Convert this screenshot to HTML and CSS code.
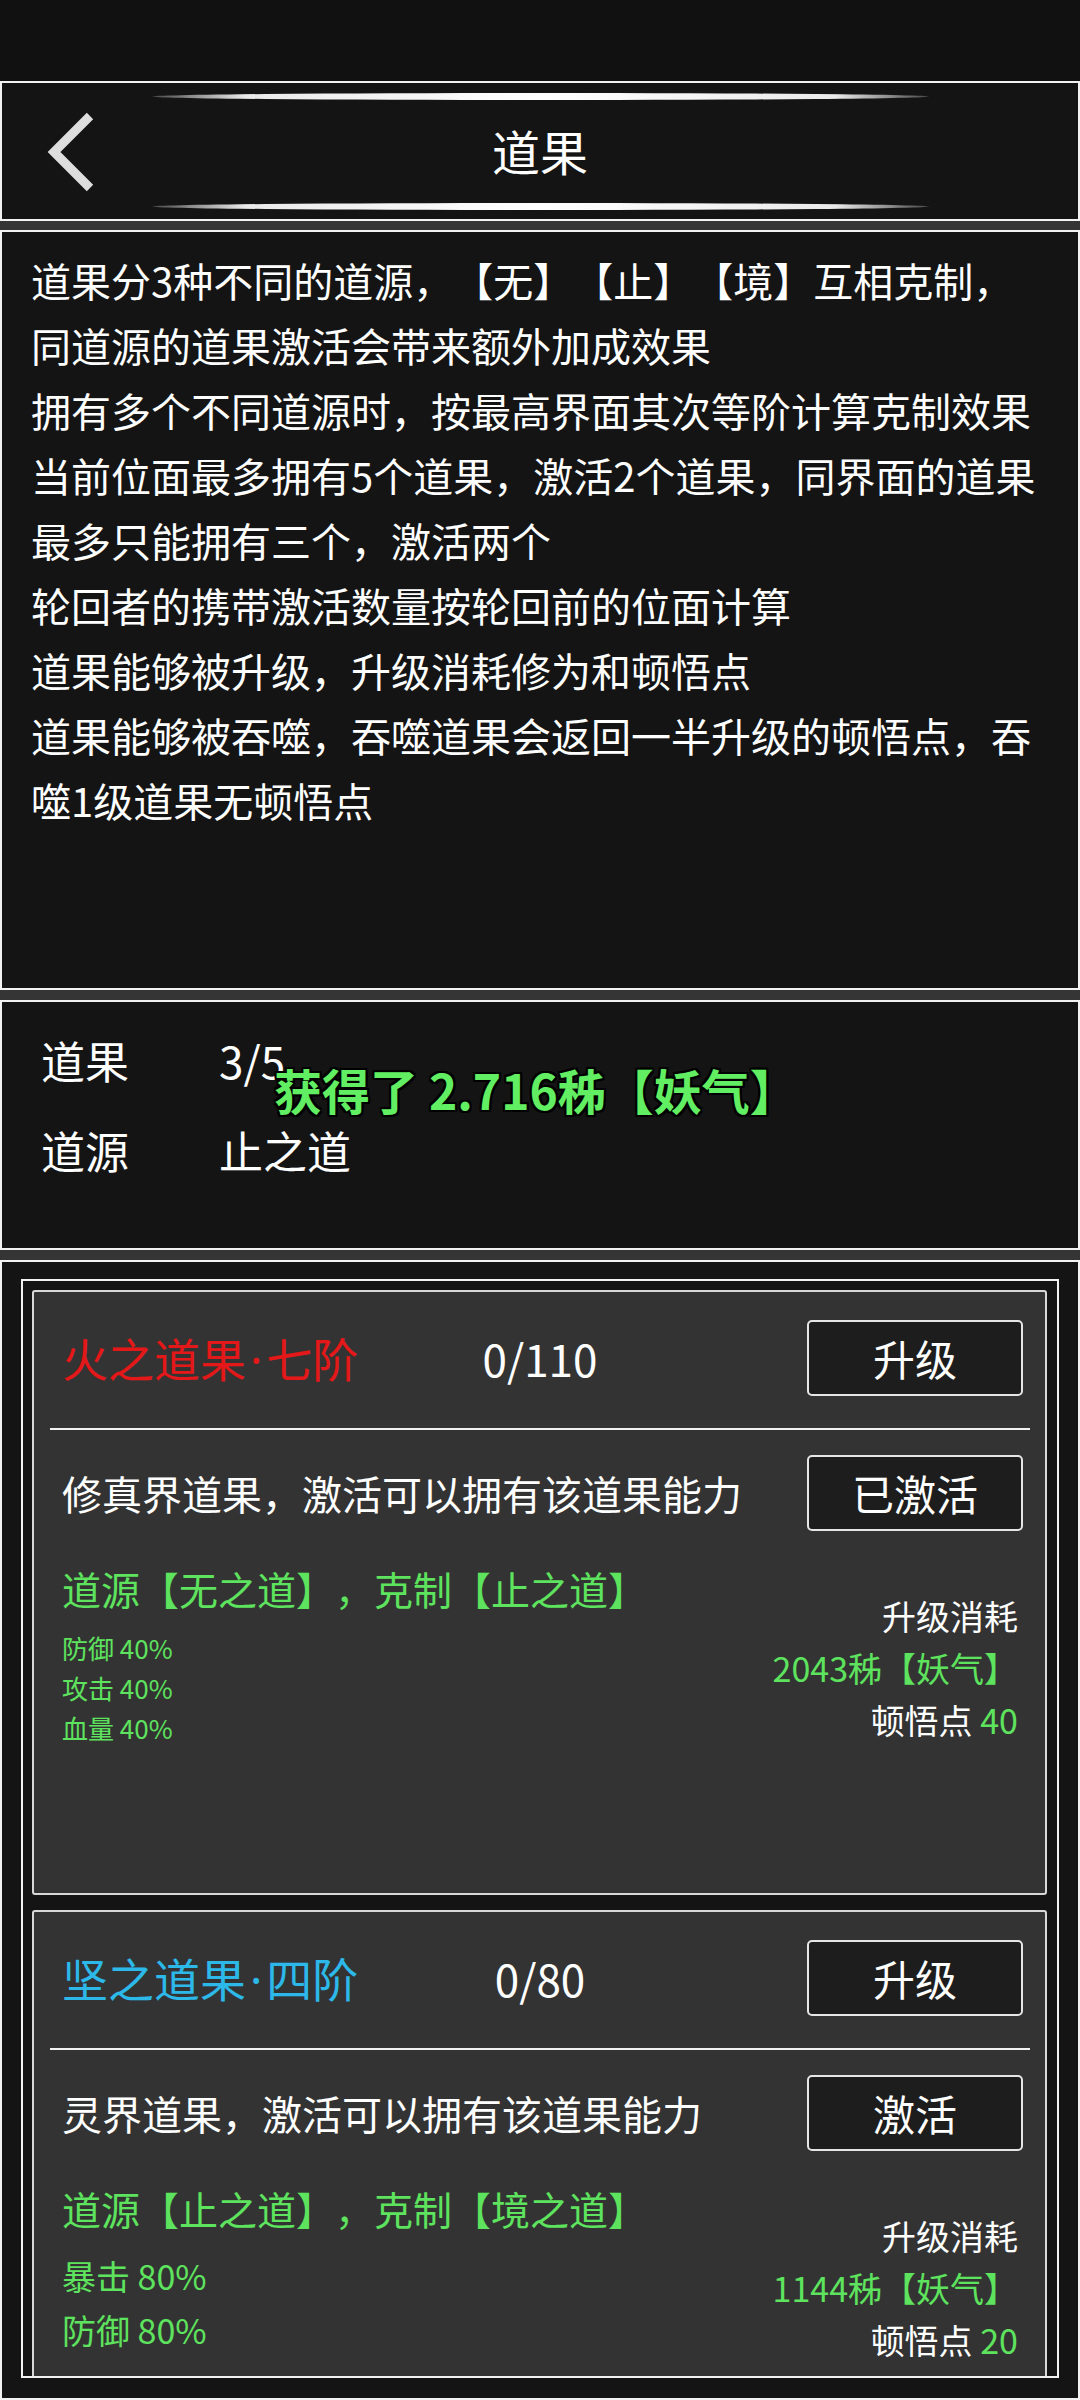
FILE: index.html
```html
<!DOCTYPE html>
<html lang="zh-CN">
<head>
    <meta charset="UTF-8">
    <meta name="viewport" content="width=device-width, initial-scale=1.0">
    <title>道果</title>
    <link rel="stylesheet" href="styles.css">
</head>
<body>
    <div class="statusbar"></div>

    <header class="panel topbar">
        <div class="glow"></div>
        <div class="topbar-row">
            <button class="back" aria-label="返回">
                <svg width="50" height="80" viewBox="0 0 50 80">
                    <polyline points="45,4 9,40 45,76" fill="none" stroke="#dedede" stroke-width="9" stroke-linejoin="miter"/>
                </svg>
            </button>
            <h1>道果</h1>
            <span></span>
        </div>
        <div class="glow"></div>
    </header>

    <section class="panel intro">
        <div>道果分3种不同的道源，【无】【止】【境】互相克制，</div>
        <div>同道源的道果激活会带来额外加成效果</div>
        <div>拥有多个不同道源时，按最高界面其次等阶计算克制效果</div>
        <div>当前位面最多拥有5个道果，激活2个道果，同界面的道果</div>
        <div>最多只能拥有三个，激活两个</div>
        <div>轮回者的携带激活数量按轮回前的位面计算</div>
        <div>道果能够被升级，升级消耗修为和顿悟点</div>
        <div>道果能够被吞噬，吞噬道果会返回一半升级的顿悟点，吞</div>
        <div>噬1级道果无顿悟点</div>
    </section>

    <section class="panel summary">
        <div class="summary-row"><span>道果</span><span>3/5</span></div>
        <div class="summary-row"><span>道源</span><span>止之道</span></div>
        <div class="toast">获得了 2.716秭【妖气】</div>
    </section>

    <section class="panel list">
        <div class="frame">
            <div class="card">
                <div class="card-head">
                    <span class="card-title fire">火之道果<span class="dot">·</span>七阶</span>
                    <span class="card-count">0/110</span>
                    <button class="btn">升级</button>
                </div>
                <div class="divider"></div>
                <div class="card-desc">
                    <span>修真界道果，激活可以拥有该道果能力</span>
                    <button class="btn">已激活</button>
                </div>
                <div class="card-body">
                    <div class="effects">
                        <div class="source">道源【无之道】，克制【止之道】</div>
                        <div class="stats">
                            <div>防御 40%</div>
                            <div>攻击 40%</div>
                            <div>血量 40%</div>
                        </div>
                    </div>
                    <div class="cost">
                        <div>升级消耗</div>
                        <div class="green">2043秭【妖气】</div>
                        <div>顿悟点 <span class="green">40</span></div>
                    </div>
                </div>
            </div>

            <div class="card">
                <div class="card-head">
                    <span class="card-title firm">坚之道果<span class="dot">·</span>四阶</span>
                    <span class="card-count">0/80</span>
                    <button class="btn">升级</button>
                </div>
                <div class="divider"></div>
                <div class="card-desc">
                    <span>灵界道果，激活可以拥有该道果能力</span>
                    <button class="btn">激活</button>
                </div>
                <div class="card-body">
                    <div class="effects">
                        <div class="source">道源【止之道】，克制【境之道】</div>
                        <div class="stats stats-large">
                            <div>暴击 80%</div>
                            <div>防御 80%</div>
                        </div>
                    </div>
                    <div class="cost">
                        <div>升级消耗</div>
                        <div class="green">1144秭【妖气】</div>
                        <div>顿悟点 <span class="green">20</span></div>
                    </div>
                </div>
            </div>
        </div>
    </section>
</body>
</html>
```

FILE: styles.css
```css
* {
    box-sizing: border-box;
}
body {
    margin: 0;
    width: 1080px;
    height: 2400px;
    overflow: hidden;
    background-color: #353535;
    color: #fff;
    font-family: "Noto Sans CJK SC", "Noto Sans", sans-serif;
    text-spacing-trim: space-all;
}
.statusbar {
    height: 81px;
    background-color: #111;
}
.panel {
    background-color: #141414;
    border: 2px solid #f2f2f2;
}
.topbar {
    height: 140px;
    padding: 10px 0 9px;
    display: flex;
    flex-direction: column;
}
.glow {
    width: 777px;
    height: 7px;
    margin: 0 auto;
    border-radius: 50%;
    background: linear-gradient(to right, rgba(190, 190, 190, 0.3), #eaeaea 12%, #fff 50%, #eaeaea 88%, rgba(190, 190, 190, 0.3));
}
.topbar-row {
    flex: 1;
    display: grid;
    grid-template-columns: 1fr auto 1fr;
    align-items: center;
}
.back {
    justify-self: start;
    margin-left: 43px;
    padding: 0;
    border: none;
    background: none;
    display: flex;
}
.topbar h1 {
    margin: 0 0 4px;
    font-size: 48px;
    font-weight: normal;
    line-height: 1;
}
.intro {
    margin-top: 9px;
    height: 760px;
    padding: 16px 29px;
    font-size: 40px;
    line-height: 65px;
    white-space: nowrap;
}
.summary {
    position: relative;
    margin-top: 10px;
    height: 250px;
    padding: 13px 39px;
    font-size: 44px;
}
.summary-row {
    display: grid;
    grid-template-columns: 178px auto;
    line-height: 90px;
}
.toast {
    position: absolute;
    left: 272px;
    top: 62px;
    font-size: 48px;
    font-weight: bold;
    line-height: 50px;
    color: #62ee62;
    white-space: nowrap;
    text-shadow: 2px 0 0 #000, -2px 0 0 #000, 0 2px 0 #000, 0 -2px 0 #000,
        2px 2px 0 #000, -2px -2px 0 #000, 2px -2px 0 #000, -2px 2px 0 #000;
}
.list {
    margin-top: 10px;
    height: 1140px;
    padding: 17px 19px 0;
}
.frame {
    height: 1099px;
    overflow: hidden;
    border: 2px solid #f2f2f2;
    padding: 9px 10px 0 9px;
    display: flex;
    flex-direction: column;
    gap: 15px;
}
.card {
    flex-shrink: 0;
    min-height: 605px;
    background-color: #333;
    border: 2px solid #d8d8d8;
    border-radius: 3px;
}
.card-head {
    display: grid;
    grid-template-columns: 350px 256px 1fr;
    align-items: center;
    padding: 28px 22px 0 28px;
}
.card-title {
    font-size: 46px;
    line-height: 1;
}
.dot {
    font-family: "Noto Sans", sans-serif;
    margin: 0 4px;
}
.fire {
    color: #e41818;
}
.firm {
    color: #2cb8e8;
}
.card-count {
    font-size: 44px;
    line-height: 1;
    text-align: center;
}
.btn {
    justify-self: end;
    width: 216px;
    height: 76px;
    padding: 0;
    background-color: #1d1d1d;
    border: 2px solid #e6e6e6;
    border-radius: 5px;
    color: #fff;
    font-family: inherit;
    font-size: 42px;
    line-height: 1;
}
.divider {
    height: 2px;
    margin: 32px 15px 0 16px;
    background-color: #f2f2f2;
}
.card-desc {
    display: flex;
    justify-content: space-between;
    align-items: center;
    margin-top: 25px;
    padding: 0 22px 0 28px;
    font-size: 40px;
}
.card-body {
    display: flex;
    justify-content: space-between;
    margin-top: 29px;
    padding: 0 27px 0 28px;
}
.source {
    font-size: 39px;
    line-height: 56px;
    color: #5ee35e;
}
.stats {
    margin-top: 12px;
    font-size: 26px;
    line-height: 40px;
    color: #5ee35e;
}
.stats-large {
    margin-top: 13px;
    font-size: 34px;
    line-height: 54px;
}
.cost {
    padding-top: 30px;
    text-align: right;
    font-size: 34px;
    line-height: 52px;
}
.green {
    color: #5ee35e;
}
```
